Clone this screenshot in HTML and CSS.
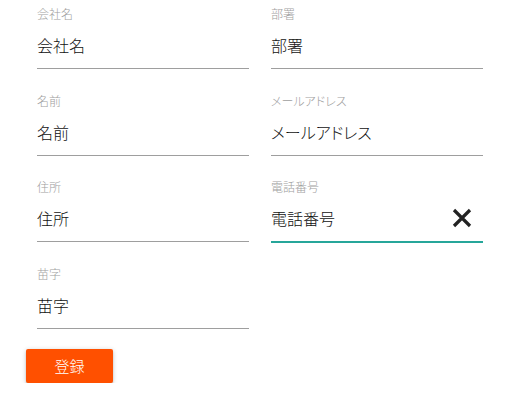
FILE: index.html
```html
<!DOCTYPE html>
<html lang="ja">
<head>
<meta charset="utf-8">
<link rel="stylesheet" href="styles.css">
</head>
<body>
<form class="form">
  <div class="grid">
    <div class="field"><label class="label">会社名</label><div class="value">会社名</div></div>
    <div class="field"><label class="label">部署</label><div class="value">部署</div></div>
    <div class="field"><label class="label">名前</label><div class="value">名前</div></div>
    <div class="field"><label class="label">メールアドレス</label><div class="value">メールアドレス</div></div>
    <div class="field"><label class="label">住所</label><div class="value">住所</div></div>
    <div class="field active"><label class="label">電話番号</label><div class="value">電話番号</div>
      <svg class="clear" width="20" height="20" viewBox="0 0 20 20"><path d="M2 2L18 18M18 2L2 18" stroke="#222" stroke-width="3.2" fill="none"/></svg>
    </div>
    <div class="field"><label class="label">苗字</label><div class="value">苗字</div></div>
  </div>
  <div class="actions"><button type="button" class="btn">登録</button></div>
</form>
</body>
</html>
```
FILE: styles.css
```css
html, body {
  margin: 0;
  padding: 0;
  background: #fff;
  font-family: "Noto Sans CJK JP", "Noto Sans", sans-serif;
  font-feature-settings: "palt";
}
.form {
  width: 517px;
}
.grid {
  display: grid;
  grid-template-columns: 212px 212px;
  column-gap: 22px;
  row-gap: 17.67px;
  padding-left: 37px;
}
.field {
  position: relative;
  padding-top: 6px;
  border-bottom: 1px solid #9e9e9e;
}
.label {
  display: block;
  height: 16px;
  line-height: 16px;
  font-size: 12px;
  font-weight: 300;
  color: #9e9e9e;
}
.value {
  height: 46px;
  line-height: 46px;
  font-size: 16px;
  font-weight: 300;
  color: #111;
}
.field.active {
  border-bottom-color: #26a69a;
  box-shadow: 0 1px 0 0 #26a69a;
}
.clear {
  position: absolute;
  right: 11px;
  top: 35px;
}
.actions {
  padding: 20px 0 0 26px;
}
.btn {
  width: 87px;
  height: 34px;
  border: none;
  border-radius: 2px;
  background: #ff5000;
  color: #fff;
  font-family: "Noto Sans CJK JP", "Noto Sans", sans-serif;
  font-feature-settings: "palt";
  font-size: 15px;
  font-weight: 300;
  padding: 0;
  box-shadow: 0 2px 2px 0 rgba(0,0,0,.14), 0 3px 1px -2px rgba(0,0,0,.12), 0 1px 5px 0 rgba(0,0,0,.2);
}
```
